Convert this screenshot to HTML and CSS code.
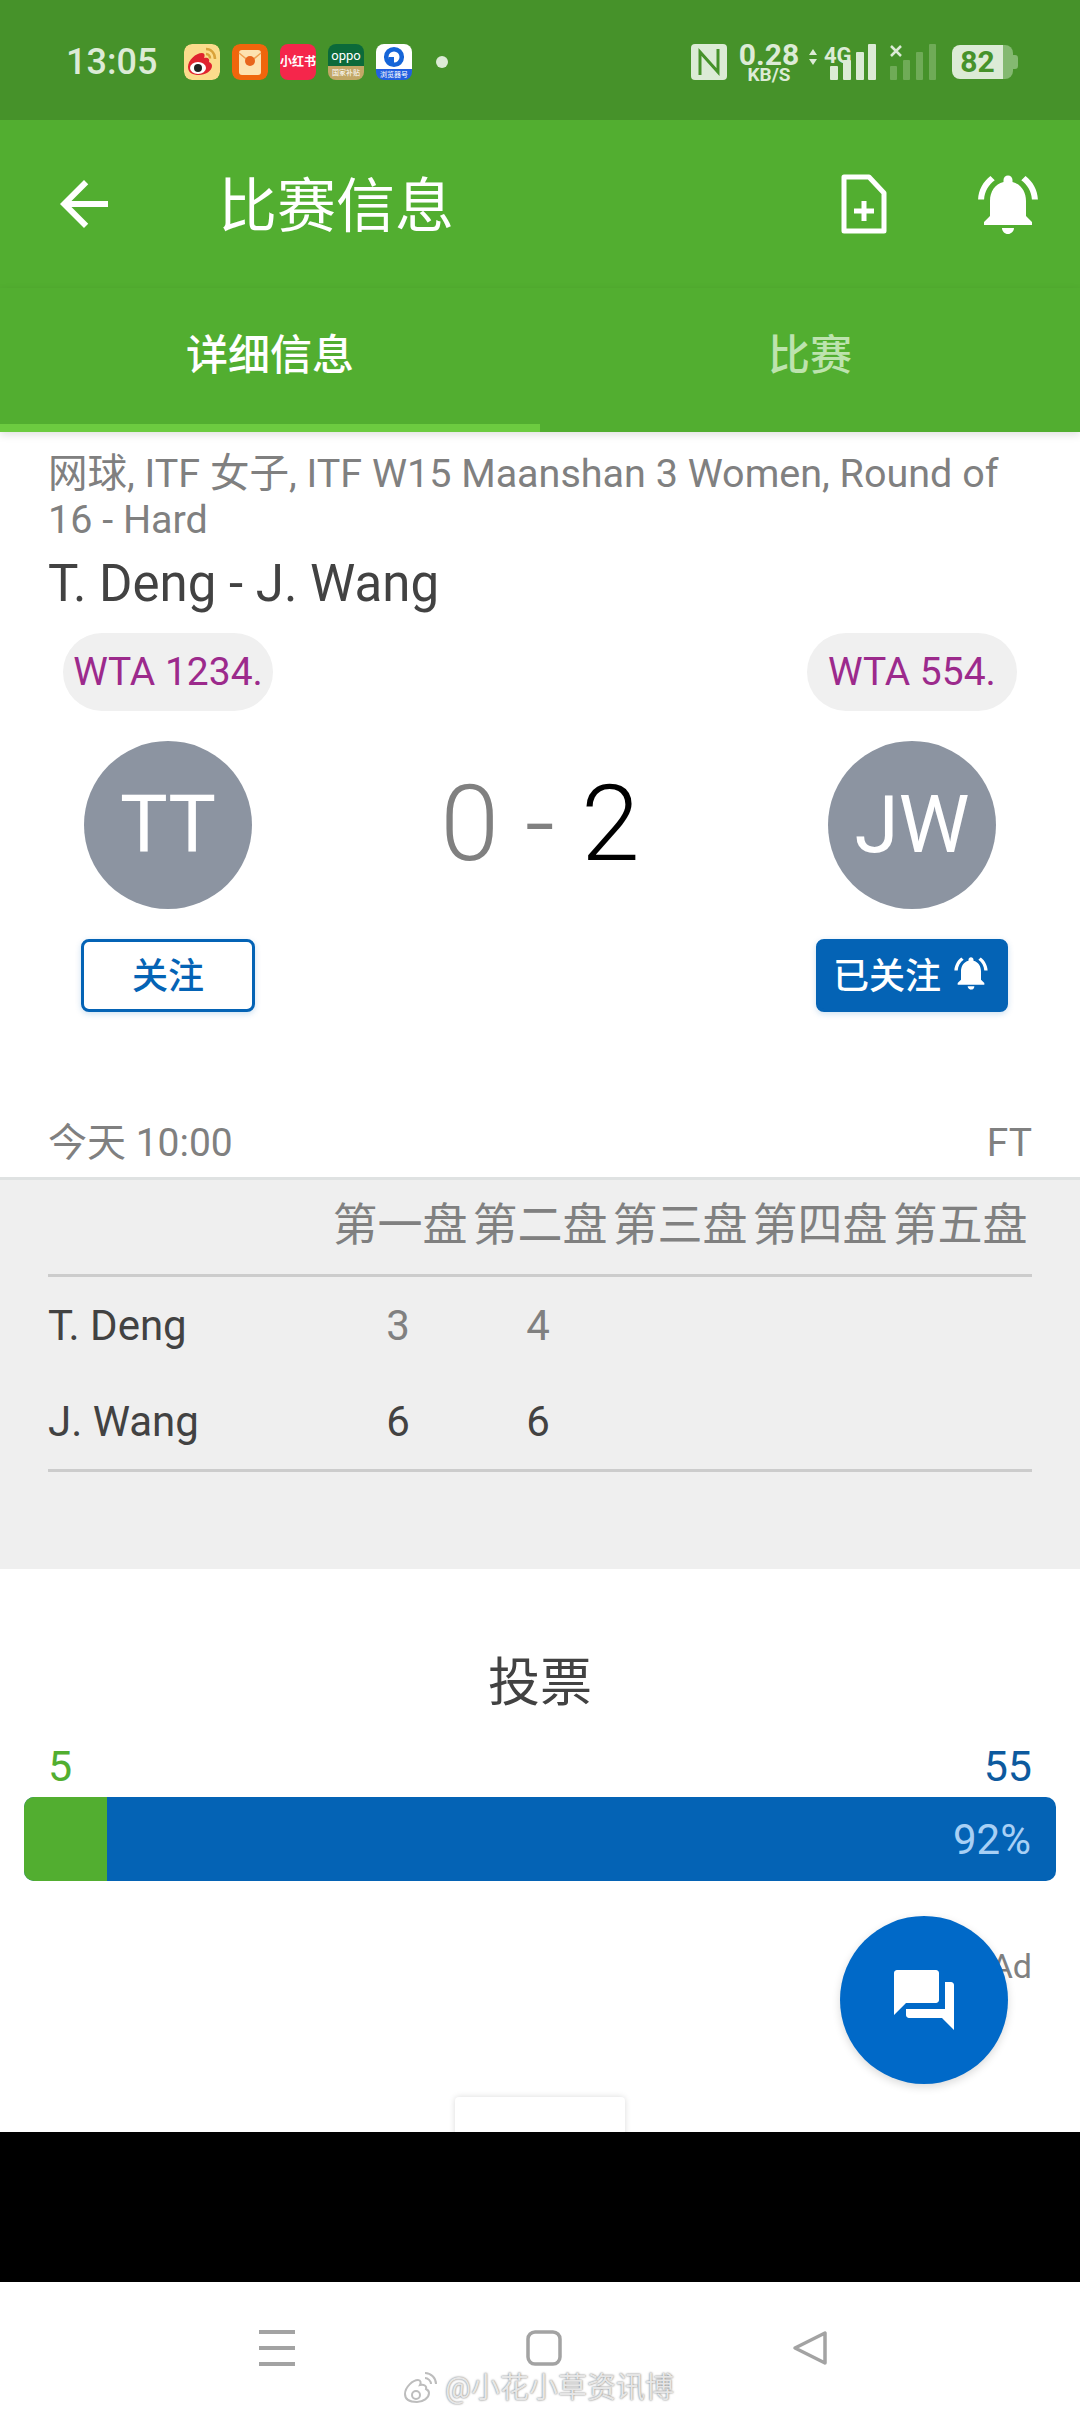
FILE: index.html
```html
<!DOCTYPE html>
<html lang="zh">
<head>
    <meta charset="UTF-8">
    <meta name="viewport" content="width=device-width, initial-scale=1.0">
    <title>比赛信息</title>
    <link rel="stylesheet" href="styles.css">
</head>
<body>
    <div class="screen">
        <div class="status-bar">
            <span class="status-time">13:05</span>
            <div class="status-apps">
                <svg class="app-icon" viewBox="0 0 36 36">
                    <rect width="36" height="36" rx="8" fill="#fbdc8c"/>
                    <path d="M22 5c5 0 9 4 9 10M22 10c2.500 0 4 2 4 4.500" fill="none" stroke="#d9a23a" stroke-width="2.500"/>
                    <path d="M4 23c0-7 8-14 14-14 3 0 3 3 2 5 4-1 6 1 5 4 2 1 3 2 3 4 0 5-7 9-13 9S4 29 4 23z" fill="#e0232e"/>
                    <ellipse cx="14" cy="24" rx="8" ry="6" fill="#fff"/>
                    <circle cx="14" cy="24" r="4" fill="#222"/>
                </svg>
                <svg class="app-icon" viewBox="0 0 36 36">
                    <rect width="36" height="36" rx="8" fill="#f0660c"/>
                    <rect x="7" y="6" width="22" height="25" rx="3" fill="#fde2b0"/>
                    <path d="M7 9l11 9 11-9" fill="none" stroke="#f0a050" stroke-width="1.500"/>
                    <circle cx="18" cy="17" r="5" fill="#e8651c"/>
                </svg>
                <div class="app-icon app-red">小红书</div>
                <div class="app-icon app-oppo">
                    <span class="oppo-name">oppo</span>
                    <span class="oppo-sub">国家补贴</span>
                </div>
                <div class="app-icon app-blue">
                    <svg class="blue-mark" viewBox="0 0 24 24">
                        <circle cx="12" cy="12" r="8.500" fill="none" stroke="#1565d8" stroke-width="5"/>
                        <path d="M12 12h-6v8h6z" fill="#1565d8"/>
                    </svg>
                    <span class="blue-sub">浏览器号</span>
                </div>
                <span class="status-dot"></span>
            </div>
            <div class="status-right">
                <svg class="nfc-icon" viewBox="0 0 36 36">
                    <rect width="36" height="36" rx="4" fill="#dcebd6"/>
                    <path d="M9 31V8l18 20V5" fill="none" stroke="#46922a" stroke-width="3"/>
                </svg>
                <div class="net-speed">
                    <span class="net-value">0.28</span>
                    <span class="net-unit">KB/S</span>
                </div>
                <div class="net-type">
                    <svg class="net-arrows" viewBox="0 0 10 16">
                        <path d="M5 0l4 6H1zM5 16l-4-6h8z" fill="#dcebd6"/>
                    </svg>
                    <span>4G</span>
                </div>
                <svg class="signal" viewBox="0 0 46 36">
                    <rect x="0" y="22" width="8" height="14" rx="1" fill="#dcebd6"/>
                    <rect x="13" y="16" width="8" height="20" rx="1" fill="#dcebd6"/>
                    <rect x="26" y="8" width="8" height="28" rx="1" fill="#dcebd6"/>
                    <rect x="38" y="0" width="8" height="36" rx="1" fill="#dcebd6"/>
                </svg>
                <svg class="signal" viewBox="0 0 46 36">
                    <path d="M1 2l10 10M11 2L1 12" stroke="#dcebd6" stroke-width="2.500"/>
                    <rect x="0" y="22" width="7" height="14" rx="1" fill="#6fab57"/>
                    <rect x="13" y="16" width="7" height="20" rx="1" fill="#6fab57"/>
                    <rect x="26" y="8" width="7" height="28" rx="1" fill="#6fab57"/>
                    <rect x="39" y="0" width="7" height="36" rx="1" fill="#6fab57"/>
                </svg>
                <div class="battery">
                    <span class="battery-level">82</span>
                    <span class="battery-rest"></span>
                    <span class="battery-cap"></span>
                </div>
            </div>
        </div>

        <div class="toolbar">
            <svg class="back-icon" viewBox="0 0 24 24"><path d="M20 11H7.830l5.590-5.590L12 4l-8 8 8 8 1.410-1.410L7.830 13H20v-2z"/></svg>
            <h1 class="toolbar-title">比赛信息</h1>
            <svg class="file-icon" viewBox="0 0 48 60">
                <path d="M4 3h25l15 16v38H4z" fill="none" stroke="#fff" stroke-width="5" stroke-linejoin="round"/>
                <path d="M24 27v20M14 37h20" stroke="#fff" stroke-width="5"/>
            </svg>
            <svg class="bell-icon" viewBox="0 0 24 24"><path d="M7.580 4.080L6.150 2.650C3.750 4.480 2.170 7.300 2.030 10.500h2c.15-2.650 1.510-4.970 3.550-6.420zm12.390 6.420h2c-.15-3.200-1.730-6.020-4.120-7.850l-1.420 1.430c2.020 1.450 3.390 3.770 3.540 6.420zM18 11c0-3.070-1.640-5.640-4.500-6.320V4c0-.83-.67-1.500-1.500-1.500s-1.500.67-1.500 1.500v.68C7.630 5.360 6 7.920 6 11v5l-2 2v1h16v-1l-2-2v-5zm-6 11c.14 0 .27-.01.4-.04.65-.14 1.180-.58 1.440-1.180.1-.24.15-.5.15-.78h-4c.01 1.100.9 2 2.010 2z"/></svg>
        </div>
        <div class="tabs">
            <div class="tab tab-active">详细信息</div>
            <div class="tab">比赛</div>
        </div>

        <div class="content">
            <div class="match-info">
                <p class="match-league">网球, ITF 女子, ITF W15 Maanshan 3 Women, Round of 16 - Hard</p>
                <h2 class="match-name">T. Deng - J. Wang</h2>
            </div>

            <div class="players">
                <div class="player">
                    <div class="rank-pill">WTA 1234.</div>
                    <div class="avatar">TT</div>
                    <button class="follow-button">关注</button>
                </div>
                <div class="score"><span class="score-lost">0 - </span><span class="score-won">2</span></div>
                <div class="player">
                    <div class="rank-pill">WTA 554.</div>
                    <div class="avatar">JW</div>
                    <button class="follow-button following">
                        已关注
                        <svg class="follow-bell" viewBox="0 0 24 24"><path d="M7.580 4.080L6.150 2.650C3.750 4.480 2.170 7.300 2.030 10.500h2c.15-2.650 1.510-4.970 3.550-6.420zm12.390 6.420h2c-.15-3.200-1.730-6.020-4.120-7.850l-1.420 1.430c2.020 1.450 3.390 3.770 3.540 6.420zM18 11c0-3.070-1.640-5.640-4.500-6.320V4c0-.83-.67-1.500-1.500-1.500s-1.500.67-1.500 1.500v.68C7.630 5.360 6 7.920 6 11v5l-2 2v1h16v-1l-2-2v-5zm-6 11c.14 0 .27-.01.4-.04.65-.14 1.180-.58 1.440-1.180.1-.24.15-.5.15-.78h-4c.01 1.100.9 2 2.010 2z"/></svg>
                    </button>
                </div>
            </div>

            <div class="time-row">
                <span>今天 10:00</span>
                <span>FT</span>
            </div>

            <div class="sets">
                <div class="set-row set-head">
                    <span></span>
                    <span>第一盘</span>
                    <span>第二盘</span>
                    <span>第三盘</span>
                    <span>第四盘</span>
                    <span>第五盘</span>
                </div>
                <div class="set-row set-loser">
                    <span class="set-name">T. Deng</span>
                    <span>3</span>
                    <span>4</span>
                </div>
                <div class="set-row set-winner">
                    <span class="set-name">J. Wang</span>
                    <span>6</span>
                    <span>6</span>
                </div>
            </div>

            <h3 class="vote-title">投票</h3>
            <div class="vote-counts">
                <span class="vote-home">5</span>
                <span class="vote-away">55</span>
            </div>
            <div class="vote-bar">
                <div class="vote-part" style="width: 8%"></div>
                <div class="vote-percent">92%</div>
            </div>
            <div class="ad-label">Ad</div>
            <div class="ad-box"></div>

            <button class="chat-fab">
                <svg class="chat-icon" viewBox="0 0 24 24"><path d="M21 6h-2v9H6v2c0 .55.45 1 1 1h11l4 4V7c0-.55-.45-1-1-1zm-4 6V3c0-.55-.45-1-1-1H3c-.55 0-1 .45-1 1v14l4-4h10c.55 0 1-.45 1-1z"/></svg>
            </button>
        </div>

        <div class="black-band"></div>

        <div class="nav-bar">
            <svg class="nav-icon" viewBox="0 0 36 36">
                <path d="M0 2h36M0 18h36M0 34h36" stroke="#a3a3a3" stroke-width="4"/>
            </svg>
            <svg class="nav-icon" viewBox="0 0 36 36">
                <rect x="2" y="2" width="32" height="32" rx="7" fill="none" stroke="#a3a3a3" stroke-width="3.500"/>
            </svg>
            <svg class="nav-icon" viewBox="0 0 36 36">
                <path d="M33 3v30L3 18z" fill="none" stroke="#a3a3a3" stroke-width="3.500" stroke-linejoin="round"/>
            </svg>
            <div class="watermark">
                <svg class="watermark-logo" viewBox="0 0 36 36">
                    <path d="M22 3c6 0 11 5 11 11M22 8c3 0 6 3 6 6" fill="none" stroke="#bdbdbd" stroke-width="2"/>
                    <path d="M2 24c0-7 8-14 13-14 3 0 3 3 2 5 4-1 7 1 6 4 2 1 3 2 3 4 0 5-6 9-12 9S2 30 2 24z" fill="#fff" stroke="#bdbdbd" stroke-width="2"/>
                    <circle cx="13" cy="25" r="4" fill="none" stroke="#bdbdbd" stroke-width="2"/>
                </svg>
                <span class="watermark-text">@小花小草资讯博</span>
            </div>
        </div>
    </div>
</body>
</html>
```

FILE: styles.css
```css
* {
    box-sizing: border-box;
}

html,
body {
    margin: 0;
    padding: 0;
}

body {
    font-family: Roboto, "Noto Sans CJK SC", sans-serif;
    background-color: #fff;
}

.screen {
    width: 1080px;
    height: 2414px;
    display: flex;
    flex-direction: column;
    overflow: hidden;
}

/* status bar */
.status-bar {
    height: 120px;
    padding: 4px 62px 0 66px;
    display: flex;
    align-items: center;
    background-color: #46922a;
    color: #dcebd6;
    flex-shrink: 0;
}

.status-time {
    width: 118px;
    font-size: 36px;
    font-weight: 500;
}

.status-apps {
    display: flex;
    align-items: center;
    gap: 12px;
}

.app-icon {
    width: 36px;
    height: 36px;
    border-radius: 8px;
    overflow: hidden;
    flex-shrink: 0;
}

.app-red {
    background-color: #f5264b;
    color: #fff;
    font-size: 12px;
    font-weight: 700;
    line-height: 36px;
    text-align: center;
    white-space: nowrap;
}

.app-oppo {
    display: flex;
    flex-direction: column;
    align-items: center;
    background: linear-gradient(#0b6a3a 60%, #c2a766 60%);
    color: #fff;
    line-height: 1;
}

.oppo-name {
    height: 22px;
    font-size: 13px;
    line-height: 24px;
}

.oppo-sub {
    font-size: 7px;
    line-height: 14px;
    white-space: nowrap;
}

.app-blue {
    display: flex;
    flex-direction: column;
    align-items: center;
    background: linear-gradient(#fff 70%, #2260e0 70%);
}

.blue-mark {
    width: 22px;
    height: 22px;
    margin-top: 2px;
    flex-shrink: 0;
}

.blue-sub {
    color: #fff;
    font-size: 7px;
    line-height: 14px;
    white-space: nowrap;
}

.status-dot {
    width: 12px;
    height: 12px;
    margin-left: 12px;
    border-radius: 50%;
    background-color: #dcebd6;
}

.status-right {
    margin-left: auto;
    display: flex;
    align-items: center;
}

.nfc-icon {
    width: 36px;
    height: 36px;
}

.net-speed {
    width: 60px;
    margin-left: 12px;
    display: flex;
    flex-direction: column;
    align-items: center;
    font-weight: 700;
    line-height: 1;
}

.net-value {
    font-size: 30px;
    height: 25px;
}

.net-unit {
    font-size: 19px;
}

.net-type {
    width: 22px;
    height: 36px;
    margin-left: 9px;
    display: flex;
    gap: 6px;
    font-size: 22px;
    font-weight: 700;
    line-height: 24px;
    white-space: nowrap;
}

.net-arrows {
    width: 10px;
    height: 16px;
    margin-top: 5px;
    flex-shrink: 0;
}

.signal {
    width: 46px;
    height: 36px;
    flex-shrink: 0;
}

.signal + .signal {
    margin-left: 14px;
}

.battery {
    margin-left: 16px;
    height: 34px;
    display: flex;
    align-items: center;
}

.battery-level {
    width: 51px;
    height: 34px;
    border-radius: 8px 0 0 8px;
    background-color: #dcebd6;
    color: #46922a;
    font-size: 30px;
    font-weight: 700;
    line-height: 34px;
    text-align: center;
}

.battery-rest {
    width: 10px;
    height: 34px;
    border-radius: 0 8px 8px 0;
    background-color: #84b971;
}

.battery-cap {
    width: 5px;
    height: 14px;
    border-radius: 0 3px 3px 0;
    background-color: #84b971;
}

/* toolbar and tabs */
.toolbar {
    height: 168px;
    display: flex;
    align-items: center;
    background-color: #52ae30;
    flex-shrink: 0;
}

.back-icon {
    width: 72px;
    height: 72px;
    margin-left: 48px;
    fill: #fff;
}

.toolbar-title {
    margin: 0 0 6px 98px;
    color: #fff;
    font-size: 59px;
    font-weight: 400;
}

.file-icon {
    width: 48px;
    height: 60px;
    margin-left: auto;
}

.bell-icon {
    width: 72px;
    height: 72px;
    margin: 0 36px 0 84px;
    fill: #fff;
}

.tabs {
    height: 144px;
    display: flex;
    background-color: #52ae30;
    box-shadow: 0 3px 8px rgba(0, 0, 0, 0.12);
    position: relative;
    flex-shrink: 0;
}

.tab {
    flex: 1;
    border-bottom: 8px solid transparent;
    color: #bde3ae;
    font-size: 42px;
    font-weight: 500;
    line-height: 136px;
    text-align: center;
}

.tab-active {
    border-bottom-color: #6ccb40;
    color: #fff;
}

/* match header */
.content {
    flex: 1;
    position: relative;
    overflow: hidden;
    display: flex;
    flex-direction: column;
}

.match-info {
    padding: 19px 48px 0;
}

.match-league {
    margin: 0;
    color: #808080;
    font-size: 39.500px;
    line-height: 46px;
}

.match-name {
    margin: 11px 0 0;
    color: #424242;
    font-size: 51px;
    font-weight: 400;
    line-height: 60px;
}

.players {
    margin-top: 19px;
    padding: 0 48px;
    display: flex;
    justify-content: space-between;
}

.player {
    width: 240px;
    display: flex;
    flex-direction: column;
    align-items: center;
    flex-shrink: 0;
}

.rank-pill {
    width: 210px;
    height: 78px;
    border-radius: 39px;
    background-color: #f0f0f0;
    color: #9c2a8c;
    font-size: 39px;
    line-height: 78px;
    text-align: center;
    white-space: nowrap;
}

.avatar {
    width: 168px;
    height: 168px;
    margin: 30px 0;
    border-radius: 50%;
    background-color: #8c94a1;
    color: #fff;
    font-size: 80px;
    font-weight: 400;
    line-height: 168px;
    text-align: center;
}

.follow-button {
    height: 73px;
    width: 174px;
    padding: 0 0 5px;
    border: 3px solid #0463b5;
    border-radius: 8px;
    background-color: #fff;
    color: #0463b5;
    font-family: inherit;
    font-size: 36px;
    font-weight: 500;
    box-shadow: 0 2px 6px rgba(4, 99, 181, 0.2);
}

.following {
    width: 192px;
    display: flex;
    align-items: center;
    justify-content: center;
    gap: 10px;
    background-color: #0463b5;
    color: #fff;
}

.follow-bell {
    width: 40px;
    height: 40px;
    fill: #fff;
}

.score {
    margin-top: 123px;
    font-size: 106px;
    font-weight: 300;
    line-height: 136px;
    white-space: nowrap;
}

.score-lost {
    color: #808080;
}

.score-won {
    color: #000;
}

.time-row {
    margin-top: 108px;
    margin-bottom: 11px;
    padding: 0 48px;
    display: flex;
    justify-content: space-between;
    color: #808080;
    font-size: 39px;
    line-height: 46px;
}

/* sets table */
.sets {
    height: 392px;
    padding: 17px 48px 0;
    border-top: 3px solid #dfe2e2;
    background-color: #efefef;
    flex-shrink: 0;
}

.set-row {
    height: 96px;
    padding-right: 4px;
    display: grid;
    grid-template-columns: 1fr repeat(5, 140px);
    align-items: center;
    font-size: 42px;
    text-align: center;
}

.set-head {
    height: 80px;
    padding-right: 2px;
    border-bottom: 3px solid #ccc;
    align-items: start;
    color: #808080;
    font-size: 45px;
    line-height: 58px;
    white-space: nowrap;
}

.set-name {
    text-align: left;
}

.set-loser {
    color: #808080;
}

.set-loser .set-name,
.set-winner {
    color: #424242;
}

.set-winner {
    height: 99px;
    border-bottom: 3px solid #ccc;
}

/* votes */
.vote-title {
    margin: 75px 0 0;
    color: #424242;
    font-size: 52px;
    font-weight: 400;
    line-height: 80px;
    text-align: center;
}

.vote-counts {
    margin-top: 17px;
    padding: 0 48px;
    display: flex;
    justify-content: space-between;
    font-size: 43px;
    line-height: 50px;
}

.vote-home {
    color: #52ae30;
}

.vote-away {
    color: #0d5a9e;
}

.vote-bar {
    height: 84px;
    margin: 6px 24px 0;
    border-radius: 10px;
    overflow: hidden;
    display: flex;
    align-items: center;
    background-color: #0463b5;
    flex-shrink: 0;
}

.vote-part {
    height: 100%;
    background-color: #52ae30;
}

.vote-percent {
    margin-left: auto;
    padding-right: 25px;
    color: #a8d0f5;
    font-size: 42px;
}

.ad-label {
    margin-top: 63px;
    padding-right: 48px;
    color: #808080;
    font-size: 34px;
    line-height: 44px;
    text-align: right;
}

.ad-box {
    width: 170px;
    height: 60px;
    margin: 109px auto 0;
    border-radius: 4px;
    background-color: #fff;
    box-shadow: 0 0 6px rgba(0, 0, 0, 0.15);
    flex-shrink: 0;
}

.chat-fab {
    position: absolute;
    left: 840px;
    top: 1484px;
    width: 168px;
    height: 168px;
    border: none;
    border-radius: 50%;
    padding: 0;
    display: flex;
    align-items: center;
    justify-content: center;
    background-color: #0069c8;
    box-shadow: 0 3px 8px rgba(0, 0, 0, 0.15);
}

.chat-icon {
    width: 72px;
    height: 72px;
    fill: #fff;
}

/* bottom */
.black-band {
    height: 150px;
    background-color: #000;
    flex-shrink: 0;
}

.nav-bar {
    height: 132px;
    padding: 48px 252px 0 259px;
    display: flex;
    justify-content: space-between;
    align-items: flex-start;
    background-color: #fff;
    position: relative;
    flex-shrink: 0;
}

.nav-icon {
    width: 36px;
    height: 36px;
}

.watermark {
    position: absolute;
    left: 403px;
    top: 88px;
    display: flex;
    align-items: center;
    gap: 6px;
}

.watermark-logo {
    width: 36px;
    height: 36px;
}

.watermark-text {
    color: #e6e6e6;
    font-size: 29px;
    line-height: 36px;
    white-space: nowrap;
    text-shadow: 0 0 2px #666;
}
```
